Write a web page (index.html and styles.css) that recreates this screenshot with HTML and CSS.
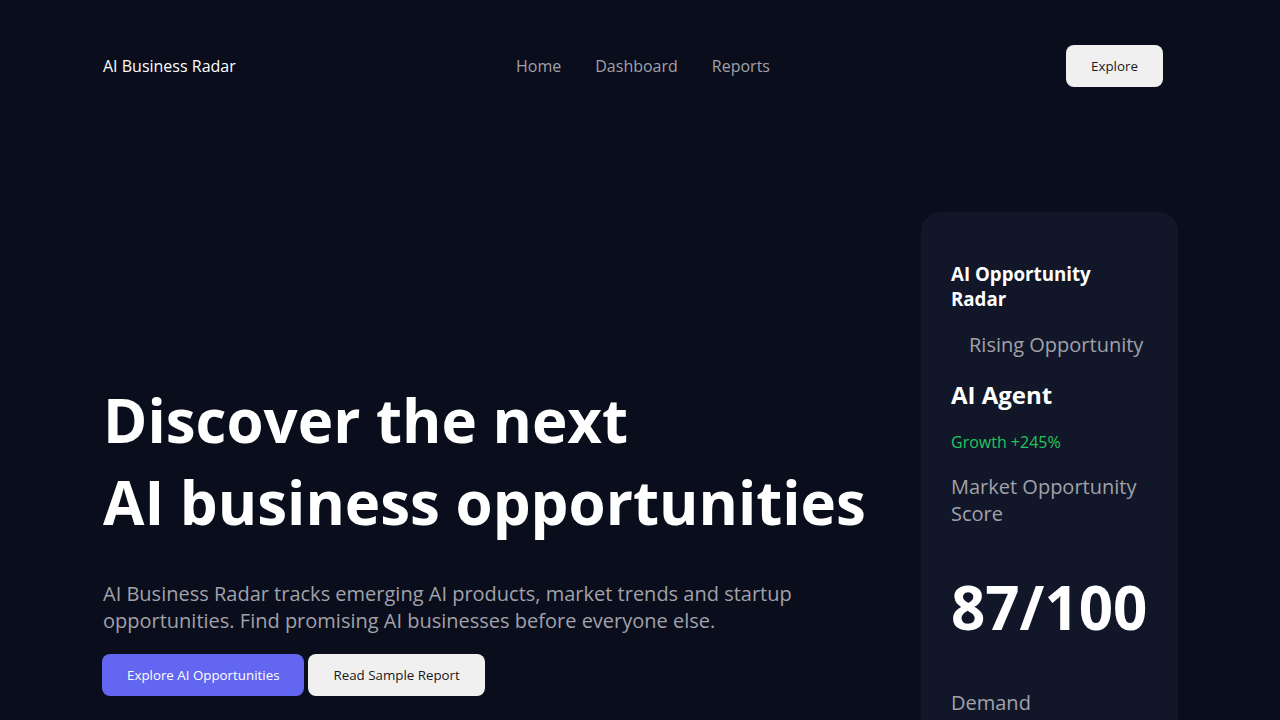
FILE: index.html
```html
<!DOCTYPE html>
<html lang="en">
<head>
<meta charset="utf-8">
<title>AI Business Radar</title>
<link rel="stylesheet" href="styles.css">
</head>
<body>
<div class="page">
  <header class="nav">
    <div class="logo">AI Business Radar</div>
    <nav class="links">
      <a href="#">Home</a>
      <a href="#">Dashboard</a>
      <a href="#">Reports</a>
    </nav>
    <button class="btn btn-light nav-btn">Explore</button>
  </header>
  <section class="hero">
    <div class="hero-text">
      <h1 class="title">Discover the next<br>AI business opportunities</h1>
      <p class="lead">AI Business Radar tracks emerging AI products, market trends and startup opportunities. Find promising AI businesses before everyone else.</p>
      <div class="actions">
        <button class="btn btn-primary">Explore AI Opportunities</button>
        <button class="btn btn-light">Read Sample Report</button>
      </div>
    </div>
    <aside class="card">
      <h3 class="card-title">AI Opportunity Radar</h3>
      <p class="card-tag">Rising Opportunity</p>
      <h2 class="card-name">AI Agent</h2>
      <p class="card-growth">Growth +245%</p>
      <p class="card-label">Market Opportunity Score</p>
      <div class="card-score">87/100</div>
      <p class="card-label">Demand</p>
      <div class="card-bar"></div>
    </aside>
  </section>
</div>
</body>
</html>
```

FILE: styles.css
```css
* { box-sizing: border-box; }
html, body {
  margin: 0;
  padding: 0;
  background: #0a0d1b;
  color: #ffffff;
  font-family: "Open Sans", "Noto Sans", sans-serif;
}
.page {
  width: 1280px;
  padding: 0 102px 0 103px;
}
.nav {
  display: grid;
  grid-template-columns: 1fr auto 1fr;
  align-items: center;
  height: 132px;
  padding-right: 15px;
}
.logo {
  font-size: 16px;
}
.links {
  display: flex;
  gap: 34px;
  margin-left: 20px;
}
.links a {
  color: #a1a1aa;
  text-decoration: none;
  font-size: 16px;
}
.btn {
  font-family: inherit;
  font-size: 13.333px;
  height: 42px;
  border: none;
  border-radius: 8px;
  padding: 0 25px;
  cursor: pointer;
}
.btn-light {
  background: #f0f0f1;
  color: #18181b;
}
.btn-primary {
  background: #6366f1;
  color: #ffffff;
}
.nav-btn {
  justify-self: end;
  width: 97px;
  padding: 0;
}
.hero {
  display: flex;
  align-items: flex-start;
  justify-content: space-between;
  margin-top: 80px;
}
.hero-text {
  flex: 1;
  margin-top: 167px;
}
.title {
  font-size: 60px;
  font-weight: 700;
  line-height: 82px;
  margin: 0 0 37px;
}
.lead {
  font-size: 20px;
  line-height: 27px;
  color: #a1a1aa;
  margin: 0 0 20px;
  max-width: 720px;
}
.actions {
  display: flex;
  gap: 4px;
  margin-left: -1px;
}
.card {
  width: 257px;
  flex: none;
  background: #111729;
  border-radius: 20px;
  padding: 49px 30px 90px;
}
.card-title {
  font-size: 18.7px;
  font-weight: 700;
  line-height: 25px;
  margin: 0 0 20px;
  width: 170px;
}
.card-tag {
  font-size: 20px;
  color: #a1a1aa;
  margin: 0 0 20px 18px;
  line-height: 27px;
}
.card-name {
  font-size: 24px;
  font-weight: 700;
  margin: 0 0 20px;
  line-height: 33px;
}
.card-growth {
  color: #22c55e;
  font-size: 16px;
  margin: 0 0 20px;
  line-height: 22px;
}
.card-label {
  font-size: 20px;
  color: #a1a1aa;
  line-height: 27px;
  margin: 0;
}
.card-score {
  font-size: 60px;
  font-weight: 700;
  line-height: 82px;
  margin: 39px 0 41px;
}
.card-bar {
  height: 8px;
  border-radius: 4px;
  background: #1f2937;
  margin-top: 14px;
}
```
